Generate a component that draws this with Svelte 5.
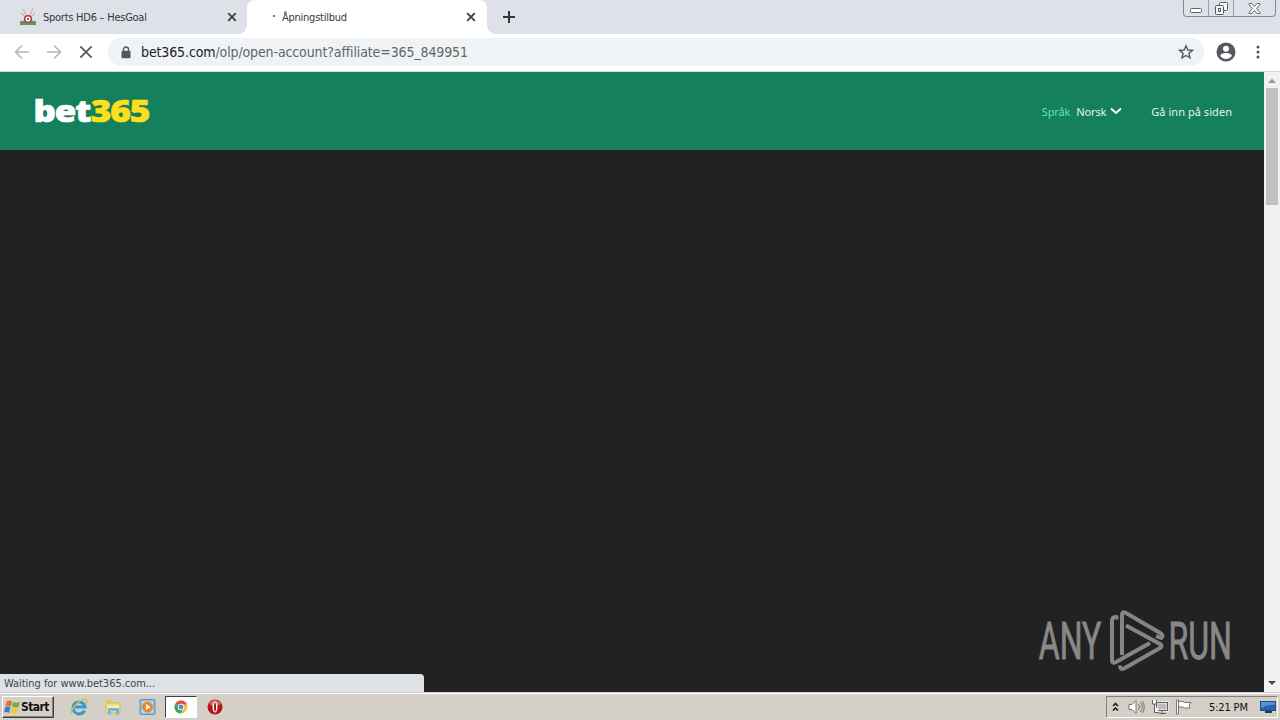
<script lang="ts">
  const url = { host: 'bet365.com', path: '/olp/open-account?affiliate=365_849951' };
  const clock = '5:21 PM';
</script>

{#snippet close()}
  <svg class="close" width="10" height="10" viewBox="0 0 10 10">
    <path d="M1.2 1.2 8.8 8.8M8.8 1.2 1.2 8.8" stroke="#3c4043" stroke-width="1.8" />
  </svg>
{/snippet}

<div class="screen">
  <div class="tabs">
    <div class="tab">
      <svg class="favicon" width="16" height="18" viewBox="0 0 16 18">
        <path d="M3 1 6 7M13 0 10 7M1 5l4 4M15 5l-4 4" stroke="#d9b3ad" stroke-width="1.3" />
        <rect y="13" width="16" height="4" fill="#65945a" />
        <path d="M3 13c0-8 10-8 10 0" fill="#e9c9bd" />
        <circle cx="8" cy="11" r="3.3" fill="#fff" stroke="#b43a3b" stroke-width="1.5" />
        <circle cx="8" cy="11" r="1" fill="#8b3434" />
      </svg>
      <span class="title">Sports HD6 – HesGoal</span>
      {@render close()}
    </div>
    <div class="tab active">
      <span class="spinner"></span>
      <span class="title">Åpningstilbud</span>
      {@render close()}
    </div>
    <svg class="plus" width="12" height="12" viewBox="0 0 12 12">
      <path d="M6 0v12M0 6h12" stroke="#303338" stroke-width="2" />
    </svg>
    <div class="window-buttons">
      <span class="min">
        <svg width="13" height="6" viewBox="0 0 13 6"><rect x=".5" y=".5" width="11" height="4" rx="1" fill="#fff" stroke="#5b626b" /></svg>
      </span>
      <span class="max">
        <svg width="13" height="13" viewBox="0 0 13 13" fill="#f4f5f6" stroke="#555c65">
          <rect x="4.5" y=".5" width="8" height="8" rx="1" />
          <rect x=".5" y="3.5" width="8" height="9" rx="1" />
          <rect x="3.5" y="6.5" width="2" height="3" />
        </svg>
      </span>
      <span class="quit">
        <svg width="13" height="11" viewBox="0 0 13 11">
          <path d="M1 .5h3l2.5 3 2.5-3h3v1L8.6 5.5 12 9.5v1H9l-2.5-3-2.5 3H1v-1l3.4-4L1 1.5z" fill="#f5f6f7" stroke="#646b74" />
        </svg>
      </span>
    </div>
  </div>

  <div class="toolbar">
    <svg class="nav" width="16" height="16" viewBox="0 0 16 16" fill="none" stroke="#b5b7ba" stroke-width="1.6">
      <path d="M15 8H2M8 1.5 1.5 8 8 14.5" />
    </svg>
    <svg class="nav" width="16" height="16" viewBox="0 0 16 16" fill="none" stroke="#b5b7ba" stroke-width="1.6">
      <path d="M1 8h13M8 1.5 14.5 8 8 14.5" />
    </svg>
    <svg class="nav" width="16" height="16" viewBox="0 0 16 16" stroke="#54575b" stroke-width="1.7">
      <path d="M2.3 2.3l11.4 11.4M13.7 2.3l-11.4 11.4" />
    </svg>
    <div class="omnibox">
      <svg width="10" height="13" viewBox="0 0 10 13">
        <path d="M2.5 6V3.5a2.5 2.5 0 0 1 5 0V6" fill="none" stroke="#54585d" stroke-width="1.4" />
        <rect x=".5" y="4.8" width="9" height="7.5" rx="1" fill="#54585d" />
      </svg>
      <span class="url"><b>{url.host}</b>{url.path}</span>
      <svg class="star" width="16" height="16" viewBox="0 0 16 16">
        <path d="m8 1.8 1.8 4.2 4.600.4-3.5 3 1.1 4.5L8 11.5l-4 2.4 1.1-4.5-3.5-3L6.2 6z" fill="none" stroke="#55585d" stroke-width="1.4" />
      </svg>
    </div>
    <svg class="avatar" width="20" height="20" viewBox="0 0 20 20">
      <circle cx="10" cy="10" r="9.5" fill="#55585d" />
      <circle cx="10" cy="6.8" r="3" fill="#fff" />
      <path d="M4.2 14c0-4 11.6-4 11.6 0-2.8 4-8.8 4-11.6 0z" fill="#fff" />
    </svg>
    <svg class="dots" width="4" height="14" viewBox="0 0 4 14" fill="#505358">
      <circle cx="2" cy="2" r="1.5" /><circle cx="2" cy="7" r="1.5" /><circle cx="2" cy="12" r="1.5" />
    </svg>
  </div>

  <div class="viewport">
    <main>
      <header>
        <svg class="logo" width="120" height="48" viewBox="0 0 120 48" stroke-width=".7">
          <text x="-1.5" y="35.2" textLength="56.5" lengthAdjust="spacingAndGlyphs" fill="#fff" stroke="#fff">bet</text>
          <text x="55.8" y="35.2" textLength="58.5" lengthAdjust="spacingAndGlyphs" fill="#ffdf1b" stroke="#ffdf1b">365</text>
        </svg>
        <span class="lang">Språk</span>
        <span class="norsk">Norsk</span>
        <svg class="chevron" width="12" height="8" viewBox="0 0 12 8">
          <path d="m1 1.5 5 4.5 5-4.5" fill="none" stroke="#fff" stroke-width="1.8" />
        </svg>
        <span class="enter">Gå inn på siden</span>
      </header>
    </main>
    <div class="scrollbar">
      <svg width="16" height="16" viewBox="0 0 16 16"><path d="M4 11l4-4.5 4 4.5z" fill="#9b9b9b" /></svg>
      <div class="thumb"></div>
      <svg class="down" width="16" height="16" viewBox="0 0 16 16"><path d="M4 5l4 4 4-4z" fill="#454545" /></svg>
    </div>
    <div class="status">Waiting for www.bet365.com...</div>
    <svg class="watermark" width="210" height="80" viewBox="0 0 210 80">
      <g fill="#888" stroke="#888" stroke-width=".9">
        <text x="2.8" y="54" textLength="62.5" lengthAdjust="spacingAndGlyphs">ANY</text>
        <text x="132.5" y="54" textLength="63.5" lengthAdjust="spacingAndGlyphs">RUN</text>
      </g>
      <g fill="none" stroke="#858585" stroke-width="4" stroke-linejoin="round">
        <path d="M80.5 14.5V12Q76 11.500 76 16V55q0 4 4 2L114 38" />
        <path d="M86 50V10q0-4 4-2l35 20.500q3 2.500 0 4.500l-5-2" />
        <path d="M90 20.500l34 18.500q3 2 0 4L88 63.500q-4 2-4-3" />
      </g>
    </svg>
  </div>

  <div class="taskbar">
    <div class="start">
      <svg width="17" height="15" viewBox="0 0 17 15">
        <path d="M3 1q3-1 5 .5L6.7 6.7Q4 5 1.5 6z" fill="#e66b32" />
        <path d="M9 2q3 1.5 7 0l-1.5 5q-3.5 1.2-6.5-.3z" fill="#73ad46" />
        <path d="M1.2 7q3-1 5.2.5L5 13q-2.5-1.5-5-.5z" fill="#377ec6" />
        <path d="M7.5 8q3 1.5 6.5.3l-1.5 5Q9 14.5 6 13z" fill="#f3c633" />
      </svg>
      <b>Start</b>
    </div>
    <div class="launchers">
      <span>
        <svg width="18" height="18" viewBox="0 0 18 18" fill="none">
          <path d="M14.5 12.5a6 6 0 1 1 .5-3.5H5" stroke="#3199d6" stroke-width="3" />
          <path d="M2 16C-1 13 9 1 15 1.5c3 .4 1.5 3.5.5 5" stroke="#dfba47" stroke-width="1.4" />
        </svg>
      </span>
      <span>
        <svg width="17" height="16" viewBox="0 0 17 16">
          <path d="M1 3V1h5l1 2h7v3H1z" fill="#dfc566" />
          <path d="M1 4h14v10H1z" fill="#f3dc8c" stroke="#d9bb5d" />
          <path d="M3 7h11v3H3z" fill="#f9edbb" />
          <path d="M3 15.5V9h11v6.5h-3V12H6v3.5z" fill="#71b6dd" />
        </svg>
      </span>
      <span>
        <svg width="17" height="16" viewBox="0 0 17 16">
          <rect x="1" y=".5" width="15" height="15" rx="1" fill="#8dc0e5" stroke="#5d96bd" />
          <rect x="3" y="2.5" width="11" height="11" fill="#c9e4f3" />
          <circle cx="8.5" cy="8" r="5.5" fill="#ed8728" />
          <path d="M7 5v6l4.5-3z" fill="#fff" />
        </svg>
      </span>
      <span class="running">
        <svg width="14" height="14" viewBox="0 0 14 14">
          <circle cx="7" cy="7" r="6.5" fill="#f3c53b" />
          <path d="M7 7 1.4 3.7A6.5 6.5 0 0 1 13 4.5H7z" fill="#db5147" />
          <path d="M1.4 3.7A6.5 6.5 0 0 0 7 13.5L9 9z" fill="#40a45c" />
          <circle cx="7" cy="7" r="3.2" fill="#fff" /><circle cx="7" cy="7" r="2.4" fill="#4b87df" />
        </svg>
      </span>
      <span>
        <svg width="16" height="16" viewBox="0 0 16 16">
          <circle cx="8" cy="8" r="7.5" fill="#b51519" />
          <path d="M2 5Q8-3 14 5 8 8 2 5z" fill="#d76d6c" />
          <ellipse cx="8" cy="8" rx="2.5" ry="5.5" fill="#fff" /><ellipse cx="8" cy="8" rx="1" ry="4.5" fill="#99161a" />
        </svg>
      </span>
    </div>
    <div class="tray">
      <svg class="expand" width="7" height="10" viewBox="0 0 7 10"><path d="m1 4 2.5-2.5L6 4M1 8.5 3.5 6 6 8.5" fill="none" stroke="#111" stroke-width="1.5" /></svg>
      <svg class="sound" width="17" height="16" viewBox="0 0 17 16" fill="none" stroke="#777">
        <path d="M1 5.5h3l4-4v13l-4-4H1z" fill="#fff" />
        <path d="M10.5 5q2 3 0 6M12.5 3q3.5 5 0 10M14.5 2q3.5 6 0 12" />
      </svg>
      <svg class="network" width="17" height="16" viewBox="0 0 17 16" stroke="#606060">
        <rect x="4.5" y="3.5" width="11" height="8" fill="#bdbdbd" stroke="#fff" stroke-width="2" />
        <rect x="4.5" y="3.5" width="11" height="8" fill="none" />
        <path d="M7 14.5h7M10 12v2M.5 1v4h4V1M2.5 5v8.5H7" fill="#fff" />
      </svg>
      <svg class="flag" width="16" height="16" viewBox="0 0 16 16" fill="#fff" stroke="#757575">
        <path d="M.5 1v14h2V1zM2.5 2.5q4-1 6 1h6.5L13 6l1 3H8.5q-2-1.5-6-1z" />
      </svg>
      <time>{clock}</time>
      <svg class="desktop" width="16" height="14" viewBox="0 0 16 14">
        <rect x=".5" y="1.5" width="15" height="9" fill="#2862b3" stroke="#234b82" />
        <path d="M1 2h14v3Q8 4 1 8z" fill="#5693d8" /><path d="M5 12h7" stroke="#243e60" stroke-width="2" />
      </svg>
    </div>
  </div>
</div>

<style>
  :global(body) {
    margin: 0;
  }

  .screen {
    width: 1280px;
    height: 720px;
    overflow: hidden;
    display: flex;
    flex-direction: column;
    background: #fff;
    font-family: 'DejaVu Sans Condensed', 'DejaVu Sans', sans-serif;
    font-stretch: condensed;
    font-size: 11px;
    white-space: nowrap;
  }

  svg {
    display: block;
    flex: none;
  }

  .tabs {
    height: 34px;
    flex: none;
    display: flex;
    background: #dee1e8;
  }

  .tab {
    width: 247px;
    box-sizing: border-box;
    padding: 0 10px 0 20px;
    display: flex;
    align-items: center;
    color: #33363b;
    flex: none;
  }

  .title {
    flex: 1;
    margin-left: 7px;
    letter-spacing: -0.25px;
  }

  .active {
    position: relative;
    width: 240px;
    background: #fff;
    border-radius: 8px 8px 0 0;
    padding: 0 11px 0 26px;
  }

  .active::before,
  .active::after {
    content: '';
    position: absolute;
    bottom: 0;
    left: -8px;
    width: 8px;
    height: 8px;
    background: radial-gradient(circle at 0 0, transparent 7.5px, #fff 8px);
  }

  .active::after {
    left: 240px;
    background: radial-gradient(circle at 100% 0, transparent 7.5px, #fff 8px);
  }

  .spinner {
    width: 2px;
    height: 2px;
    margin-bottom: 3px;
    background: #4d76c1;
  }

  .plus {
    margin: 11px 0 0 16px;
  }

  .window-buttons {
    height: 17px;
    box-sizing: border-box;
    margin-left: auto;
    margin-right: 4px;
    display: flex;
    border: 1px solid #858a94;
    border-top: 0;
    border-radius: 0 0 4px 4px;
  }

  .window-buttons span {
    width: 24px;
    display: flex;
    align-items: center;
    justify-content: center;
    border-right: 1px solid #9a9fa8;
  }

  .window-buttons .min {
    align-items: end;
    padding-bottom: 2px;
  }

  .window-buttons .quit {
    width: 41px;
    border: 0;
  }

  .toolbar {
    height: 38px;
    box-sizing: border-box;
    flex: none;
    display: flex;
    align-items: center;
    padding: 0 20px 1px 14px;
    border-bottom: 1px solid #c9ded8;
  }

  .nav {
    margin-right: 16px;
  }

  .nav:nth-child(3) {
    margin-right: 14px;
  }

  .omnibox {
    width: 1096px;
    height: 28px;
    box-sizing: border-box;
    display: flex;
    align-items: center;
    padding: 0 10px 0 13px;
    border-radius: 14px;
    background: #f0f3f5;
  }

  .url {
    flex: 1;
    margin-left: 10px;
    font: 14px 'DejaVu Sans Condensed', 'DejaVu Sans', sans-serif;
    font-stretch: condensed;
    font-weight: 200;
    letter-spacing: -0.12px;
    color: #60656a;
  }

  .url b {
    font-weight: 200;
    color: #202124;
  }

  .avatar {
    margin-left: 12px;
  }

  .dots {
    margin-left: auto;
  }

  .viewport {
    position: relative;
    height: 620px;
    flex: none;
    display: flex;
  }

  main {
    flex: 1;
    background: #222;
  }

  header {
    height: 78px;
    display: flex;
    align-items: center;
    padding: 0 32px 0 35px;
    background: #15805d;
    color: #e4f5ed;
    font: 11px 'Noto Sans', sans-serif;
  }

  .logo {
    margin-right: auto;
    font: 800 30px 'Open Sans', sans-serif;
    letter-spacing: -1px;
  }

  .lang {
    color: #5de5b0;
    margin-right: 6px;
    letter-spacing: -0.15px;
  }

  .norsk {
    letter-spacing: -0.15px;
  }

  .chevron {
    margin: 0 29px 0 4px;
  }

  .enter {
    letter-spacing: 0.05px;
  }

  .scrollbar {
    width: 16px;
    display: flex;
    flex-direction: column;
    background: #f1f1f1;
  }

  .thumb {
    width: 12px;
    height: 117px;
    margin-left: 2px;
    background: #c1c1c1;
  }

  .down {
    margin-top: auto;
  }

  .status {
    position: absolute;
    left: 0;
    bottom: 0;
    width: 424px;
    height: 18px;
    box-sizing: border-box;
    padding-left: 4px;
    line-height: 19px;
    letter-spacing: -0.04px;
    border-radius: 0 4px 0 0;
    background: #dee1e6;
    color: #44474b;
  }

  .watermark {
    position: absolute;
    right: 34px;
    bottom: 7px;
    font: 51px Roboto, sans-serif;
  }

  .taskbar {
    height: 28px;
    box-sizing: border-box;
    display: flex;
    align-items: center;
    padding: 3px 2px 1px;
    background: #d4d0c8;
    box-shadow: inset 0 1px #d4d0c8, inset 0 2px #fff;
    color: #111;
  }

  .start {
    width: 52px;
    height: 22px;
    box-sizing: border-box;
    display: flex;
    align-items: center;
    padding-left: 1px;
    border: 1px solid;
    border-color: #fff #404040 #404040 #fff;
    box-shadow: inset -1px -1px #808080;
  }

  .start b {
    font-size: 12px;
    letter-spacing: -0.6px;
  }

  .launchers {
    display: flex;
    margin-left: 9px;
  }

  .launchers span {
    width: 32px;
    height: 22px;
    box-sizing: border-box;
    margin-right: 2px;
    display: flex;
    align-items: center;
    justify-content: center;
  }

  .launchers .running {
    background: #fff;
    border: 1px solid;
    border-color: #404040 #fff #fff #404040;
  }

  .tray {
    width: 172px;
    height: 22px;
    box-sizing: border-box;
    margin-left: auto;
    display: flex;
    align-items: center;
    padding-left: 5px;
    border: 1px solid;
    border-color: #808080 #fff #fff #808080;
  }

  .sound {
    margin-left: 9px;
  }

  .network {
    margin-left: 7px;
  }

  .flag {
    margin-left: 7px;
  }

  time {
    margin-left: 17px;
    width: 40px;
    letter-spacing: -0.15px;
  }

  .desktop {
    margin-left: 11px;
  }
</style>
